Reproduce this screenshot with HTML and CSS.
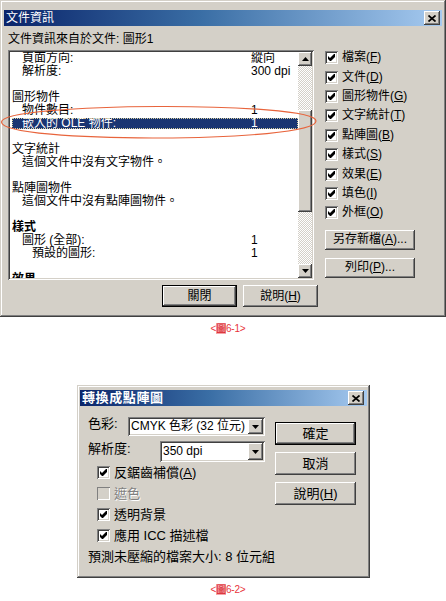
FILE: index.html
```html
<!DOCTYPE html>
<html lang="zh-Hant">
<head>
<meta charset="utf-8">
<title>文件資訊</title>
<link rel="stylesheet" href="styles.css">
</head>
<body>
<div class="win w1">
  <div class="title">
    <span class="title-text">文件資訊</span>
    <span class="xbtn"><svg width="8" height="7" viewBox="0 0 8 7"><path d="M0.5 0.5 L7.5 6.5 M7.5 0.5 L0.5 6.5" stroke="#000" stroke-width="1.7"/></svg></span>
  </div>
  <div class="w1-body">
    <div class="from">文件資訊來自於文件: 圖形1</div>
    <div class="w1-main">
      <div class="list">
        <div class="rows">
          <div class="row i1"><span class="k">頁面方向:</span><span class="v">縱向</span></div>
          <div class="row i1"><span class="k">解析度:</span><span class="v">300 dpi</span></div>
          <div class="row"></div>
          <div class="row h"><span class="k">圖形物件</span></div>
          <div class="row i1"><span class="k">物件數目:</span><span class="v">1</span></div>
          <div class="row sel"><span class="k">嵌入的 OLE 物件:</span><span class="v">1</span></div>
          <div class="row"></div>
          <div class="row h"><span class="k">文字統計</span></div>
          <div class="row i1"><span class="k">這個文件中沒有文字物件。</span></div>
          <div class="row"></div>
          <div class="row h"><span class="k">點陣圖物件</span></div>
          <div class="row i1"><span class="k">這個文件中沒有點陣圖物件。</span></div>
          <div class="row"></div>
          <div class="row h b"><span class="k">樣式</span></div>
          <div class="row i1"><span class="k">圖形 (全部):</span><span class="v">1</span></div>
          <div class="row i2"><span class="k">預設的圖形:</span><span class="v">1</span></div>
          <div class="row"></div>
          <div class="row h b"><span class="k">效果</span></div>
        </div>
        <div class="vscroll">
          <div class="sbtn"><svg width="7" height="4" viewBox="0 0 7 4"><polygon points="3.5,0 7,4 0,4" fill="#000"/></svg></div>
          <div class="track"><div class="thumb"></div></div>
          <div class="sbtn"><svg width="7" height="4" viewBox="0 0 7 4"><polygon points="0,0 7,0 3.5,4" fill="#000"/></svg></div>
        </div>
      </div>
      <div class="opts">
        <div class="chk"><span class="box"><svg width="7" height="7" viewBox="0 0 7 7"><polygon points="0,2 2,4 6,0 7,0 7,3 3,7 2,7 0,5" fill="#000"/></svg></span><span>檔案(<u>F</u>)</span></div>
        <div class="chk"><span class="box"><svg width="7" height="7" viewBox="0 0 7 7"><polygon points="0,2 2,4 6,0 7,0 7,3 3,7 2,7 0,5" fill="#000"/></svg></span><span>文件(<u>D</u>)</span></div>
        <div class="chk"><span class="box"><svg width="7" height="7" viewBox="0 0 7 7"><polygon points="0,2 2,4 6,0 7,0 7,3 3,7 2,7 0,5" fill="#000"/></svg></span><span>圖形物件(<u>G</u>)</span></div>
        <div class="chk"><span class="box"><svg width="7" height="7" viewBox="0 0 7 7"><polygon points="0,2 2,4 6,0 7,0 7,3 3,7 2,7 0,5" fill="#000"/></svg></span><span>文字統計(<u>T</u>)</span></div>
        <div class="chk"><span class="box"><svg width="7" height="7" viewBox="0 0 7 7"><polygon points="0,2 2,4 6,0 7,0 7,3 3,7 2,7 0,5" fill="#000"/></svg></span><span>點陣圖(<u>B</u>)</span></div>
        <div class="chk"><span class="box"><svg width="7" height="7" viewBox="0 0 7 7"><polygon points="0,2 2,4 6,0 7,0 7,3 3,7 2,7 0,5" fill="#000"/></svg></span><span>樣式(<u>S</u>)</span></div>
        <div class="chk"><span class="box"><svg width="7" height="7" viewBox="0 0 7 7"><polygon points="0,2 2,4 6,0 7,0 7,3 3,7 2,7 0,5" fill="#000"/></svg></span><span>效果(<u>E</u>)</span></div>
        <div class="chk"><span class="box"><svg width="7" height="7" viewBox="0 0 7 7"><polygon points="0,2 2,4 6,0 7,0 7,3 3,7 2,7 0,5" fill="#000"/></svg></span><span>填色(<u>I</u>)</span></div>
        <div class="chk"><span class="box"><svg width="7" height="7" viewBox="0 0 7 7"><polygon points="0,2 2,4 6,0 7,0 7,3 3,7 2,7 0,5" fill="#000"/></svg></span><span>外框(<u>O</u>)</span></div>
        <div class="btn side first">另存新檔(<u>A</u>)...</div>
        <div class="btn side">列印(<u>P</u>)...</div>
      </div>
    </div>
    <div class="w1-foot">
      <div class="btn def foot">關閉</div>
      <div class="btn foot">說明(<u>H</u>)</div>
    </div>
  </div>
  <svg class="ring" width="320" height="150" viewBox="0 0 320 150"><path d="M1.5,122 C1.5,102 316,101 316,121 C316,143 1.5,144 1.5,122 Z" fill="none" stroke="#e8643c" stroke-width="1.2"/></svg>
</div>

<div class="cap cap1">&lt;<span class="fig">圖</span>6-1&gt;</div>

<div class="win w2">
  <div class="title t2">
    <span class="title-text bold">轉換成點陣圖</span>
    <span class="xbtn"><svg width="8" height="7" viewBox="0 0 8 7"><path d="M0.5 0.5 L7.5 6.5 M7.5 0.5 L0.5 6.5" stroke="#000" stroke-width="1.7"/></svg></span>
  </div>
  <div class="w2-body">
    <div class="w2-left">
      <div class="field">
        <span class="flabel">色彩:</span>
        <div class="combo c1"><span class="cval">CMYK 色彩 (32 位元)</span><span class="dd"><svg width="7" height="4" viewBox="0 0 7 4"><polygon points="0,0 7,0 3.5,4" fill="#000"/></svg></span></div>
      </div>
      <div class="field f2">
        <span class="flabel">解析度:</span>
        <div class="combo c2"><span class="cval">350 dpi</span><span class="dd"><svg width="7" height="4" viewBox="0 0 7 4"><polygon points="0,0 7,0 3.5,4" fill="#000"/></svg></span></div>
      </div>
      <div class="chk2"><span class="box"><svg width="7" height="7" viewBox="0 0 7 7"><polygon points="0,2 2,4 6,0 7,0 7,3 3,7 2,7 0,5" fill="#000"/></svg></span><span>反鋸齒補償(<u>A</u>)</span></div>
      <div class="chk2 dis"><span class="box"></span><span>遮色</span></div>
      <div class="chk2"><span class="box"><svg width="7" height="7" viewBox="0 0 7 7"><polygon points="0,2 2,4 6,0 7,0 7,3 3,7 2,7 0,5" fill="#000"/></svg></span><span>透明背景</span></div>
      <div class="chk2"><span class="box"><svg width="7" height="7" viewBox="0 0 7 7"><polygon points="0,2 2,4 6,0 7,0 7,3 3,7 2,7 0,5" fill="#000"/></svg></span><span>應用 ICC 描述檔</span></div>
      <div class="est">預測未壓縮的檔案大小: 8 位元組</div>
    </div>
    <div class="w2-right">
      <div class="btn def b2">確定</div>
      <div class="btn b2">取消</div>
      <div class="btn b2">說明(<u>H</u>)</div>
    </div>
  </div>
</div>

<div class="cap cap2">&lt;<span class="fig">圖</span>6-2&gt;</div>
</body>
</html>
```

FILE: styles.css
```css
* { box-sizing: border-box; margin: 0; padding: 0; }

body {
  margin: 0;
  width: 446px;
  height: 601px;
  overflow: hidden;
  background: #fff;
  color: #000;
  font-family: "Liberation Sans", "Noto Sans CJK TC", sans-serif;
  font-size: 12px;
  line-height: 13px;
}

u { text-decoration: underline; text-underline-offset: 1px; }

.win {
  position: relative;
  background: #d4d0c8;
  box-shadow: inset -1px -1px #404040, inset 1px 1px #d4d0c8, inset -2px -2px #808080, inset 2px 2px #fff;
}

.raised, .btn, .xbtn, .sbtn, .thumb, .dd {
  background: #d4d0c8;
  box-shadow: inset -1px -1px #404040, inset 1px 1px #fff, inset -2px -2px #808080, inset 2px 2px #d4d0c8;
}

.title {
  height: 16px;
  display: flex;
  align-items: center;
  justify-content: space-between;
  padding: 0 2px 0 2px;
  background: linear-gradient(90deg, #0a246a 0%, #3a6ea5 45%, #a6caf0 100%);
  color: #fff;
}

.title-text { font-size: 12px; line-height: 14px; }
.title-text.bold { font-weight: bold; font-size: 13px; letter-spacing: 0.6px; }

.xbtn {
  width: 16px;
  height: 14px;
  display: flex;
  align-items: center;
  justify-content: center;
}

.btn {
  display: flex;
  align-items: center;
  justify-content: center;
  white-space: nowrap;
}

.btn.def {
  border: 1px solid #000;
}

/* ---------- dialog 1 ---------- */
.w1 {
  width: 446px;
  height: 317px;
  padding: 10px 4px 4px 4px;
}

.w1-body { padding: 7px 0 0 4px; }

.from { height: 13px; }

.w1-main {
  display: flex;
  margin-top: 4px;
}

.list {
  width: 306px;
  height: 230px;
  padding: 2px;
  display: flex;
  background: #fff;
  box-shadow: inset 1px 1px #808080, inset -1px -1px #fff, inset 2px 2px #404040, inset -2px -2px #d4d0c8;
}

.rows {
  flex: 1;
  overflow: hidden;
}

.row {
  height: 13px;
  display: grid;
  grid-template-columns: 241px 1fr;
  white-space: nowrap;
}

.row .k { padding-left: 2px; }
.row.i1 .k { padding-left: 12px; }
.row.i2 .k { padding-left: 22px; }
.row.b { font-weight: bold; }

.row.sel {
  height: 11px;
  margin: 1px 0 1px 2px;
  line-height: 11px;
  grid-template-columns: 239px 1fr;
  background: #1a3572;
  color: #fff;
  outline: 1px dotted #d8d0a0;
  outline-offset: -1px;
}

.row.sel .k { padding-left: 10px; }

.vscroll {
  width: 14px;
  display: flex;
  flex-direction: column;
}

.sbtn {
  height: 14px;
  display: flex;
  align-items: center;
  justify-content: center;
}

.track {
  flex: 1;
  padding-top: 44px;
  background: repeating-conic-gradient(#d4d0c8 0 25%, #fff 0 50%) 0 0 / 2px 2px;
}

.thumb {
  height: 102px;
}

.opts {
  margin-left: 11px;
  display: flex;
  flex-direction: column;
}

.chk {
  height: 19.4px;
  display: flex;
  align-items: center;
  gap: 4px;
  white-space: nowrap;
}

.chk:first-child { margin-top: -2px; }

.box {
  width: 13px;
  height: 13px;
  flex: none;
  display: flex;
  align-items: center;
  justify-content: center;
  background: #fff;
  box-shadow: inset 1px 1px #808080, inset -1px -1px #fff, inset 2px 2px #404040, inset -2px -2px #d4d0c8;
}

.btn.side {
  width: 90px;
  height: 20px;
  margin-top: 8px;
}

.btn.side.first { margin-top: 7px; }

.w1-foot {
  display: flex;
  gap: 6px;
  padding-left: 154px;
  margin-top: 5px;
}

.btn.foot {
  width: 75px;
  height: 22px;
}

.ring {
  position: absolute;
  left: 0;
  top: 0;
  pointer-events: none;
}

/* ---------- captions ---------- */
.cap {
  height: 12px;
  line-height: 12px;
  font-size: 10px;
  text-align: center;
  padding-left: 10px;
  color: #e8343c;
  letter-spacing: -0.2px;
}

.cap1 { margin-top: 6px; }
.cap2 { margin-top: 6px; }

.fig {
  background: #f4a4a8;
  color: #d81c28;
}

/* ---------- dialog 2 ---------- */
.w2 {
  width: 293px;
  height: 193px;
  margin: 50px 0 0 77px;
  padding: 5px 3px 3px 3px;
  font-size: 13px;
}

.t2 { padding: 0 3px 0 2px; }

.w2-body {
  display: flex;
}

.w2-left {
  width: 185px;
  padding: 11px 0 0 8px;
}

.field {
  height: 19px;
  display: flex;
  justify-content: space-between;
  align-items: flex-start;
}

.field.f2 {
  height: 21px;
  margin-top: 5px;
}

.flabel { line-height: 13px; padding-top: 0; }
.f2 .flabel { padding-top: 1px; }

.combo {
  height: 100%;
  display: flex;
  align-items: stretch;
  padding: 2px;
  background: #fff;
  font-size: 12px;
  box-shadow: inset 1px 1px #808080, inset -1px -1px #fff, inset 2px 2px #404040, inset -2px -2px #d4d0c8;
}

.c1 { width: 137px; }
.c2 { width: 105px; }

.cval {
  flex: 1;
  padding-left: 1px;
  display: flex;
  align-items: center;
  white-space: nowrap;
  overflow: hidden;
}

.dd {
  width: 15px;
  flex: none;
  display: flex;
  align-items: center;
  justify-content: center;
}

.chk2 {
  height: 21px;
  display: flex;
  align-items: center;
  gap: 4px;
  padding-left: 9px;
  white-space: nowrap;
}

.chk2.dis { color: #808080; text-shadow: 1px 1px #fff; }
.chk2.dis .box {
  background: #d4d0c8;
  box-shadow: inset 1px 1px #808080, inset -1px -1px #fff;
}

.est {
  height: 21px;
  line-height: 21px;
  white-space: nowrap;
}

.w2-right {
  margin-left: 10px;
  padding-top: 16px;
  display: flex;
  flex-direction: column;
  gap: 7px;
}

.btn.b2 {
  width: 81px;
  height: 23px;
}
```
